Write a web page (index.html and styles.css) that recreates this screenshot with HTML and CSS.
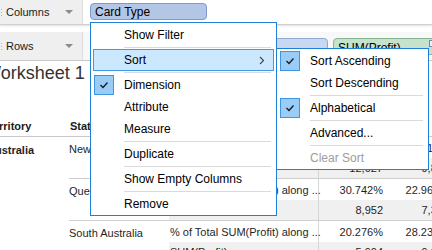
FILE: index.html
```html
<!DOCTYPE html>
<html>
<head>
<meta charset="utf-8">
<link rel="stylesheet" href="styles.css">
</head>
<body>
<div class="shelves">
  <div class="shelf shelf-cols">
    <div class="shelf-label"><span class="grip"></span><span class="label-text">Columns</span><span class="dd"></span></div>
    <div class="shelf-drop"><span class="pill pill-dim">Card Type</span></div>
  </div>
  <div class="shelf shelf-rows">
    <div class="shelf-label"><span class="grip"></span><span class="label-text">Rows</span><span class="dd"></span></div>
    <div class="shelf-drop">
      <span class="pill pill-dim2 w-a">Territory</span>
      <span class="pill pill-dim2 w-b">State</span>
      <span class="pill pill-measure">SUM(Profit)<span class="calc-icon"></span></span>
    </div>
  </div>
</div>

<div class="sheet">
  <div class="title">Worksheet 1</div>
  <div class="thead">
    <div class="th th-terr">Territory</div>
    <div class="th th-state">State</div>
  </div>
  <div class="tbody">
    <div class="terr-col">Australia</div>
    <div class="states">
      <div class="state-block">
        <div class="state-name">New South Wales</div>
        <div class="mrows">
          <div class="mrow"><div class="mname">% of Total SUM(Profit) along ...</div><div class="val">41.305%</div><div class="val">38.514%</div></div>
          <div class="mrow alt"><div class="mname">SUM(Profit)</div><div class="val">12,027</div><div class="val">9,812</div></div>
        </div>
      </div>
      <div class="state-block">
        <div class="state-name">Queensland</div>
        <div class="mrows">
          <div class="mrow"><div class="mname">% of Total SUM(Profit) along ...</div><div class="val">30.742%</div><div class="val">22.960%</div></div>
          <div class="mrow alt"><div class="mname">SUM(Profit)</div><div class="val">8,952</div><div class="val">7,345</div></div>
        </div>
      </div>
      <div class="state-block">
        <div class="state-name">South Australia</div>
        <div class="mrows">
          <div class="mrow"><div class="mname">% of Total SUM(Profit) along ...</div><div class="val">20.276%</div><div class="val">28.233%</div></div>
          <div class="mrow alt"><div class="mname">SUM(Profit)</div><div class="val">5,904</div><div class="val">9,032</div></div>
        </div>
      </div>
    </div>
  </div>
</div>

<div class="menu main-menu">
  <div class="item"><span class="text">Show Filter</span></div>
  <div class="sep"></div>
  <div class="item active"><span class="text">Sort</span>
    <svg class="chev" width="6" height="9" viewBox="0 0 6 9"><path d="M1 1 L4.5 4.5 L1 8" fill="none" stroke="#444" stroke-width="1.1"/></svg>
  </div>
  <div class="sep"></div>
  <div class="item"><span class="check"><svg width="10" height="8" viewBox="0 0 10 8"><path d="M1.5 4 L4 6.5 L8.5 1.5" fill="none" stroke="#1a1a1a" stroke-width="1.3"/></svg></span><span class="text">Dimension</span></div>
  <div class="item"><span class="text">Attribute</span></div>
  <div class="item"><span class="text">Measure</span></div>
  <div class="sep"></div>
  <div class="item"><span class="text">Duplicate</span></div>
  <div class="sep"></div>
  <div class="item"><span class="text">Show Empty Columns</span></div>
  <div class="sep"></div>
  <div class="item"><span class="text">Remove</span></div>
</div>

<div class="menu sub-menu">
  <div class="item"><span class="check"><svg width="10" height="8" viewBox="0 0 10 8"><path d="M1.5 4 L4 6.5 L8.5 1.5" fill="none" stroke="#1a1a1a" stroke-width="1.3"/></svg></span><span class="text">Sort Ascending</span></div>
  <div class="item"><span class="text">Sort Descending</span></div>
  <div class="sep"></div>
  <div class="item"><span class="check"><svg width="10" height="8" viewBox="0 0 10 8"><path d="M1.5 4 L4 6.5 L8.5 1.5" fill="none" stroke="#1a1a1a" stroke-width="1.3"/></svg></span><span class="text">Alphabetical</span></div>
  <div class="sep"></div>
  <div class="item"><span class="text">Advanced...</span></div>
  <div class="sep"></div>
  <div class="item disabled"><span class="text">Clear Sort</span></div>
</div>
</body>
</html>
```

FILE: styles.css
```css
* { box-sizing: border-box; }
html, body { margin: 0; padding: 0; }
body {
  width: 432px;
  height: 250px;
  overflow: hidden;
  position: relative;
  background: #ffffff;
  font-family: "Liberation Sans", Arial, sans-serif;
  color: #000;
}

/* ---------- shelves ---------- */
.shelf { display: flex; }
.shelf-cols {
  height: 25px;
  border-bottom: 1px solid #cfcfcf;
  box-shadow: 0 1px 2px rgba(0,0,0,0.12);
  position: relative;
  z-index: 1;
}
.shelf-rows {
  height: 29px;
  margin-top: 7px;
  border-bottom: 1px solid #c9c9c9;
  background: #f8f8f8;
}
.shelf-label {
  width: 83px;
  flex: none;
  display: flex;
  align-items: center;
  background: #efefef;
  border-right: 1px solid #dddddd;
}
.grip {
  width: 3px;
  height: 8px;
  margin-right: 3px;
  background-image: radial-gradient(circle, #b5b5b5 0.8px, transparent 1px);
  background-size: 3px 3px;
}
.label-text {
  font-size: 11px;
  color: #1a1a1a;
  flex: 1;
}
.dd {
  width: 0; height: 0;
  border-left: 4px solid transparent;
  border-right: 4px solid transparent;
  border-top: 4px solid #8c8c8c;
  margin-right: 9px;
}
.shelf-drop {
  flex: 1;
  display: flex;
  align-items: flex-start;
  gap: 5px;
  padding-left: 7px;
  overflow: hidden;
}
.shelf-cols .shelf-drop { padding-top: 3px; background: #fff; }
.shelf-rows .shelf-drop { padding-top: 6px; }
.pill {
  height: 17px;
  border-radius: 4px;
  font-size: 12px;
  line-height: 15px;
  padding: 1px 4px 0;
  white-space: nowrap;
  overflow: hidden;
  flex: none;
}
.pill-dim {
  width: 117px;
  background: #b3c6e6;
  border: 1px solid #7d9acb;
}
.pill-dim2 {
  background: #c9d8f0;
  border: 1px solid #8fa9d3;
}
.w-a { width: 110px; }
.w-b { width: 123px; }
.pill-measure {
  width: 110px;
  background: #c6e2cc;
  border: 1px solid #86b690;
  position: relative;
  padding-top: 2px;
}
.calc-icon {
  position: absolute;
  left: 95px;
  top: 1px;
  width: 7px;
  height: 7px;
  background: #e8f0f8;
  border: 1px solid #5a8fc4;
}

/* ---------- sheet ---------- */
.sheet {
  margin-left: -13px;
}
.title {
  font-size: 18px;
  line-height: 24px;
  color: #333;
  margin-left: -3px;
}
.thead {
  display: flex;
  height: 52px;
  align-items: flex-end;
  border-bottom: 1px solid #c8c8c8;
  padding-bottom: 3px;
  font-size: 11px;
  font-weight: bold;
  line-height: 14px;
  color: #1a1a1a;
}
.th-terr { width: 82px; }
.th-state { width: 100px; padding-left: 1px; }

.tbody { display: flex; font-size: 11px; color: #1f1f1f; }
.terr-col {
  width: 82px;
  flex: none;
  font-weight: bold;
  padding-top: 6px;
  line-height: 14px;
}
.states { flex: 1; }
.state-block {
  display: flex;
  border-bottom: 1px solid #cfcfcf;
}
.state-name {
  width: 100px;
  flex: none;
  padding-top: 5px;
  line-height: 14px;
  white-space: nowrap;
  overflow: hidden;
}
.mrows { flex: 1; }
.mrow { display: flex; height: 21px; align-items: center; white-space: nowrap; }
.mrow.alt { height: 20px; background: #f0f0f0; }
.mname {
  width: 150px;
  height: 100%;
  padding-left: 1px;
  display: flex;
  align-items: center;
  border-right: 1px solid #d6d6d6;
}
.val {
  width: 66px;
  flex: none;
  text-align: right;
  padding-right: 2px;
}

/* ---------- menus ---------- */
.menu {
  position: absolute;
  background: #ffffff;
  border: 1px solid #1f80d8;
  font-size: 12px;
  color: #000;
  z-index: 5;
}
.main-menu { left: 90px; top: 22px; width: 187px; padding-top: 1px; }
.sub-menu { left: 276px; top: 48px; width: 153px; padding-top: 1px; z-index: 6; }
.item {
  height: 22px;
  display: flex;
  align-items: center;
  position: relative;
  padding-left: 33px;
}
.item.active {
  background: #cce8ff;
  outline: 1px solid #3f9ae8;
  outline-offset: -1px;
  margin: 0 2px;
  padding-left: 31px;
}
.item.disabled { color: #9d9d9d; }
.check {
  position: absolute;
  left: 3px;
  top: 1px;
  width: 20px;
  height: 20px;
  background: #99cdf7;
  border: 1px solid #3d95e4;
  display: flex;
  align-items: center;
  justify-content: center;
}
.chev { position: absolute; right: 9px; top: 7px; }
.sep {
  height: 3px;
  margin-left: 33px;
  margin-right: 5px;
  position: relative;
}
.sep::after {
  content: "";
  position: absolute;
  left: 0; right: 0; top: 1px;
  height: 1px;
  background: #dadada;
}
```
